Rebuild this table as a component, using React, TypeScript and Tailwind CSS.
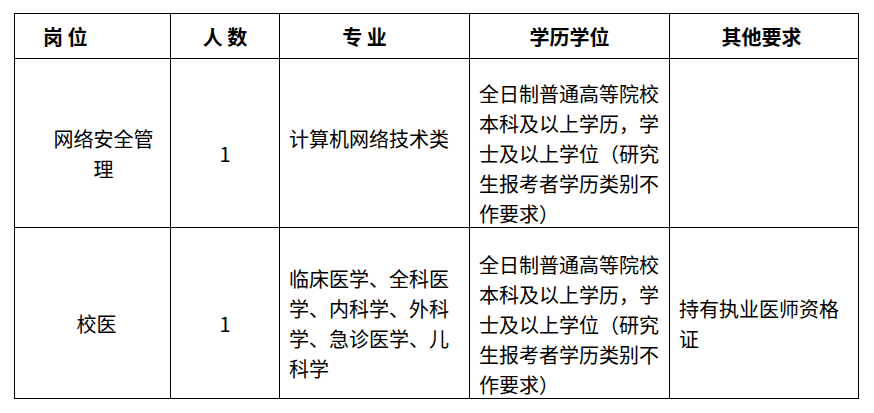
const degree = "全日制普通高等院校本科及以上学历，学士及以上学位（研究生报考者学历类别不作要求）";

function Cell({ className = "", children }: { className?: string; children?: React.ReactNode }) {
  return <div className={`flex items-center bg-white ${className}`}>{children}</div>;
}

export default function App() {
  return (
    <div className="min-h-screen bg-white pl-[14px] pt-[13px] font-['Noto_Sans_CJK_SC',sans-serif] text-[20px] leading-[30px] text-black">
      <div className="grid w-[845px] grid-cols-[155px_108px_189px_199px_188px] grid-rows-[44px_168px_170px] gap-px bg-black p-px">
        {/* header */}
        <Cell className="pl-[28px] pt-[2px] font-bold">岗 位</Cell>
        <Cell className="justify-center pt-[2px] font-bold">人 数</Cell>
        <Cell className="justify-center pr-[20px] pt-[2px] font-bold">专 业</Cell>
        <Cell className="justify-center pt-[2px] font-bold">学历学位</Cell>
        <Cell className="justify-center pr-[5px] pt-[2px] font-bold">其他要求</Cell>

        {/* row 1 */}
        <Cell className="justify-center pl-[34px] pr-[12px] pt-[22px]">
          <p className="text-center">网络安全管理</p>
        </Cell>
        <Cell className="justify-center pt-[22px]">1</Cell>
        <Cell className="px-[9px] pb-[9px]">
          <p>计算机网络技术类</p>
        </Cell>
        <Cell className="px-[9px] pt-[22px]">
          <p>{degree}</p>
        </Cell>
        <Cell />

        {/* row 2 */}
        <Cell className="justify-center pl-[20px] pr-[12px] pt-[22px]">
          <p className="text-center">校医</p>
        </Cell>
        <Cell className="justify-center pt-[22px]">1</Cell>
        <Cell className="px-[9px] pt-[22px]">
          <p>临床医学、全科医学、内科学、外科学、急诊医学、儿科学</p>
        </Cell>
        <Cell className="px-[9px] pt-[24px]">
          <p>{degree}</p>
        </Cell>
        <Cell className="px-[9px] pt-[22px]">
          <p>持有执业医师资格证</p>
        </Cell>
      </div>
    </div>
  );
}
